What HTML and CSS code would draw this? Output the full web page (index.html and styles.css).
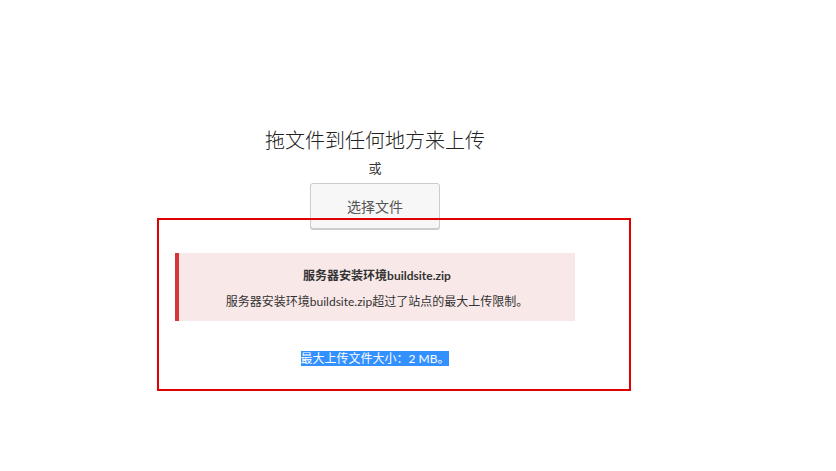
FILE: index.html
```html
<!DOCTYPE html>
<html lang="zh-CN">
<head>
  <meta charset="UTF-8" />
  <title>上传文件</title>
  <link rel="stylesheet" href="styles.css">
</head>
<body>
  <div class="uploader">
    <p class="drop-title">拖文件到任何地方来上传</p>
    <p class="drop-or">或</p>
    <button class="select-btn">选择文件</button>

    <div class="notice-error">
      <p class="notice-file">服务器安装环境buildsite.zip</p>
      <p class="notice-msg">服务器安装环境buildsite.zip超过了站点的最大上传限制。</p>
    </div>

    <p class="max-size"><span class="selected">最大上传文件大小：2 MB。</span></p>

    <div class="highlight-box"></div>
  </div>
</body>
</html>
```

FILE: styles.css
```css
html, body {
  min-height: 471px;
}

body {
  margin: 0;
  background: #fff;
  color: #333;
  font-family: "Lato", "Noto Sans CJK SC", sans-serif;
}

.uploader {
  position: relative;
  width: 750px;
  padding: 126px 0 80px;
  text-align: center;
}

.uploader p {
  margin: 0;
}

.drop-title {
  font-size: 20px;
  line-height: 28px;
  color: #222;
  font-weight: 300;
}

.drop-or {
  margin-top: 5px !important;
  font-size: 13px;
  line-height: 19px;
}

.select-btn {
  display: block;
  margin: 5px auto 0;
  width: 130px;
  height: 46px;
  background: #f7f7f7;
  border: 1px solid #ccc;
  border-radius: 3px;
  box-shadow: 0 1px 0 #ccc;
  color: #555;
  font-family: inherit;
  font-size: 14px;
}

.notice-error {
  width: 396px;
  margin: 24px auto 0;
  padding: 10px 0 6px;
  border-left: 4px solid #d63638;
  background: #f9e8e8;
  font-size: 12px;
  line-height: 26px;
}

.notice-file {
  font-weight: bold;
}

.max-size {
  margin-top: 30px !important;
  font-size: 12px;
  line-height: 16px;
}

.selected {
  background: #3390ff;
  color: #fff;
}

.highlight-box {
  position: absolute;
  left: 157px;
  top: 218px;
  width: 470px;
  height: 169px;
  border: 2px solid #e00000;
}
```
